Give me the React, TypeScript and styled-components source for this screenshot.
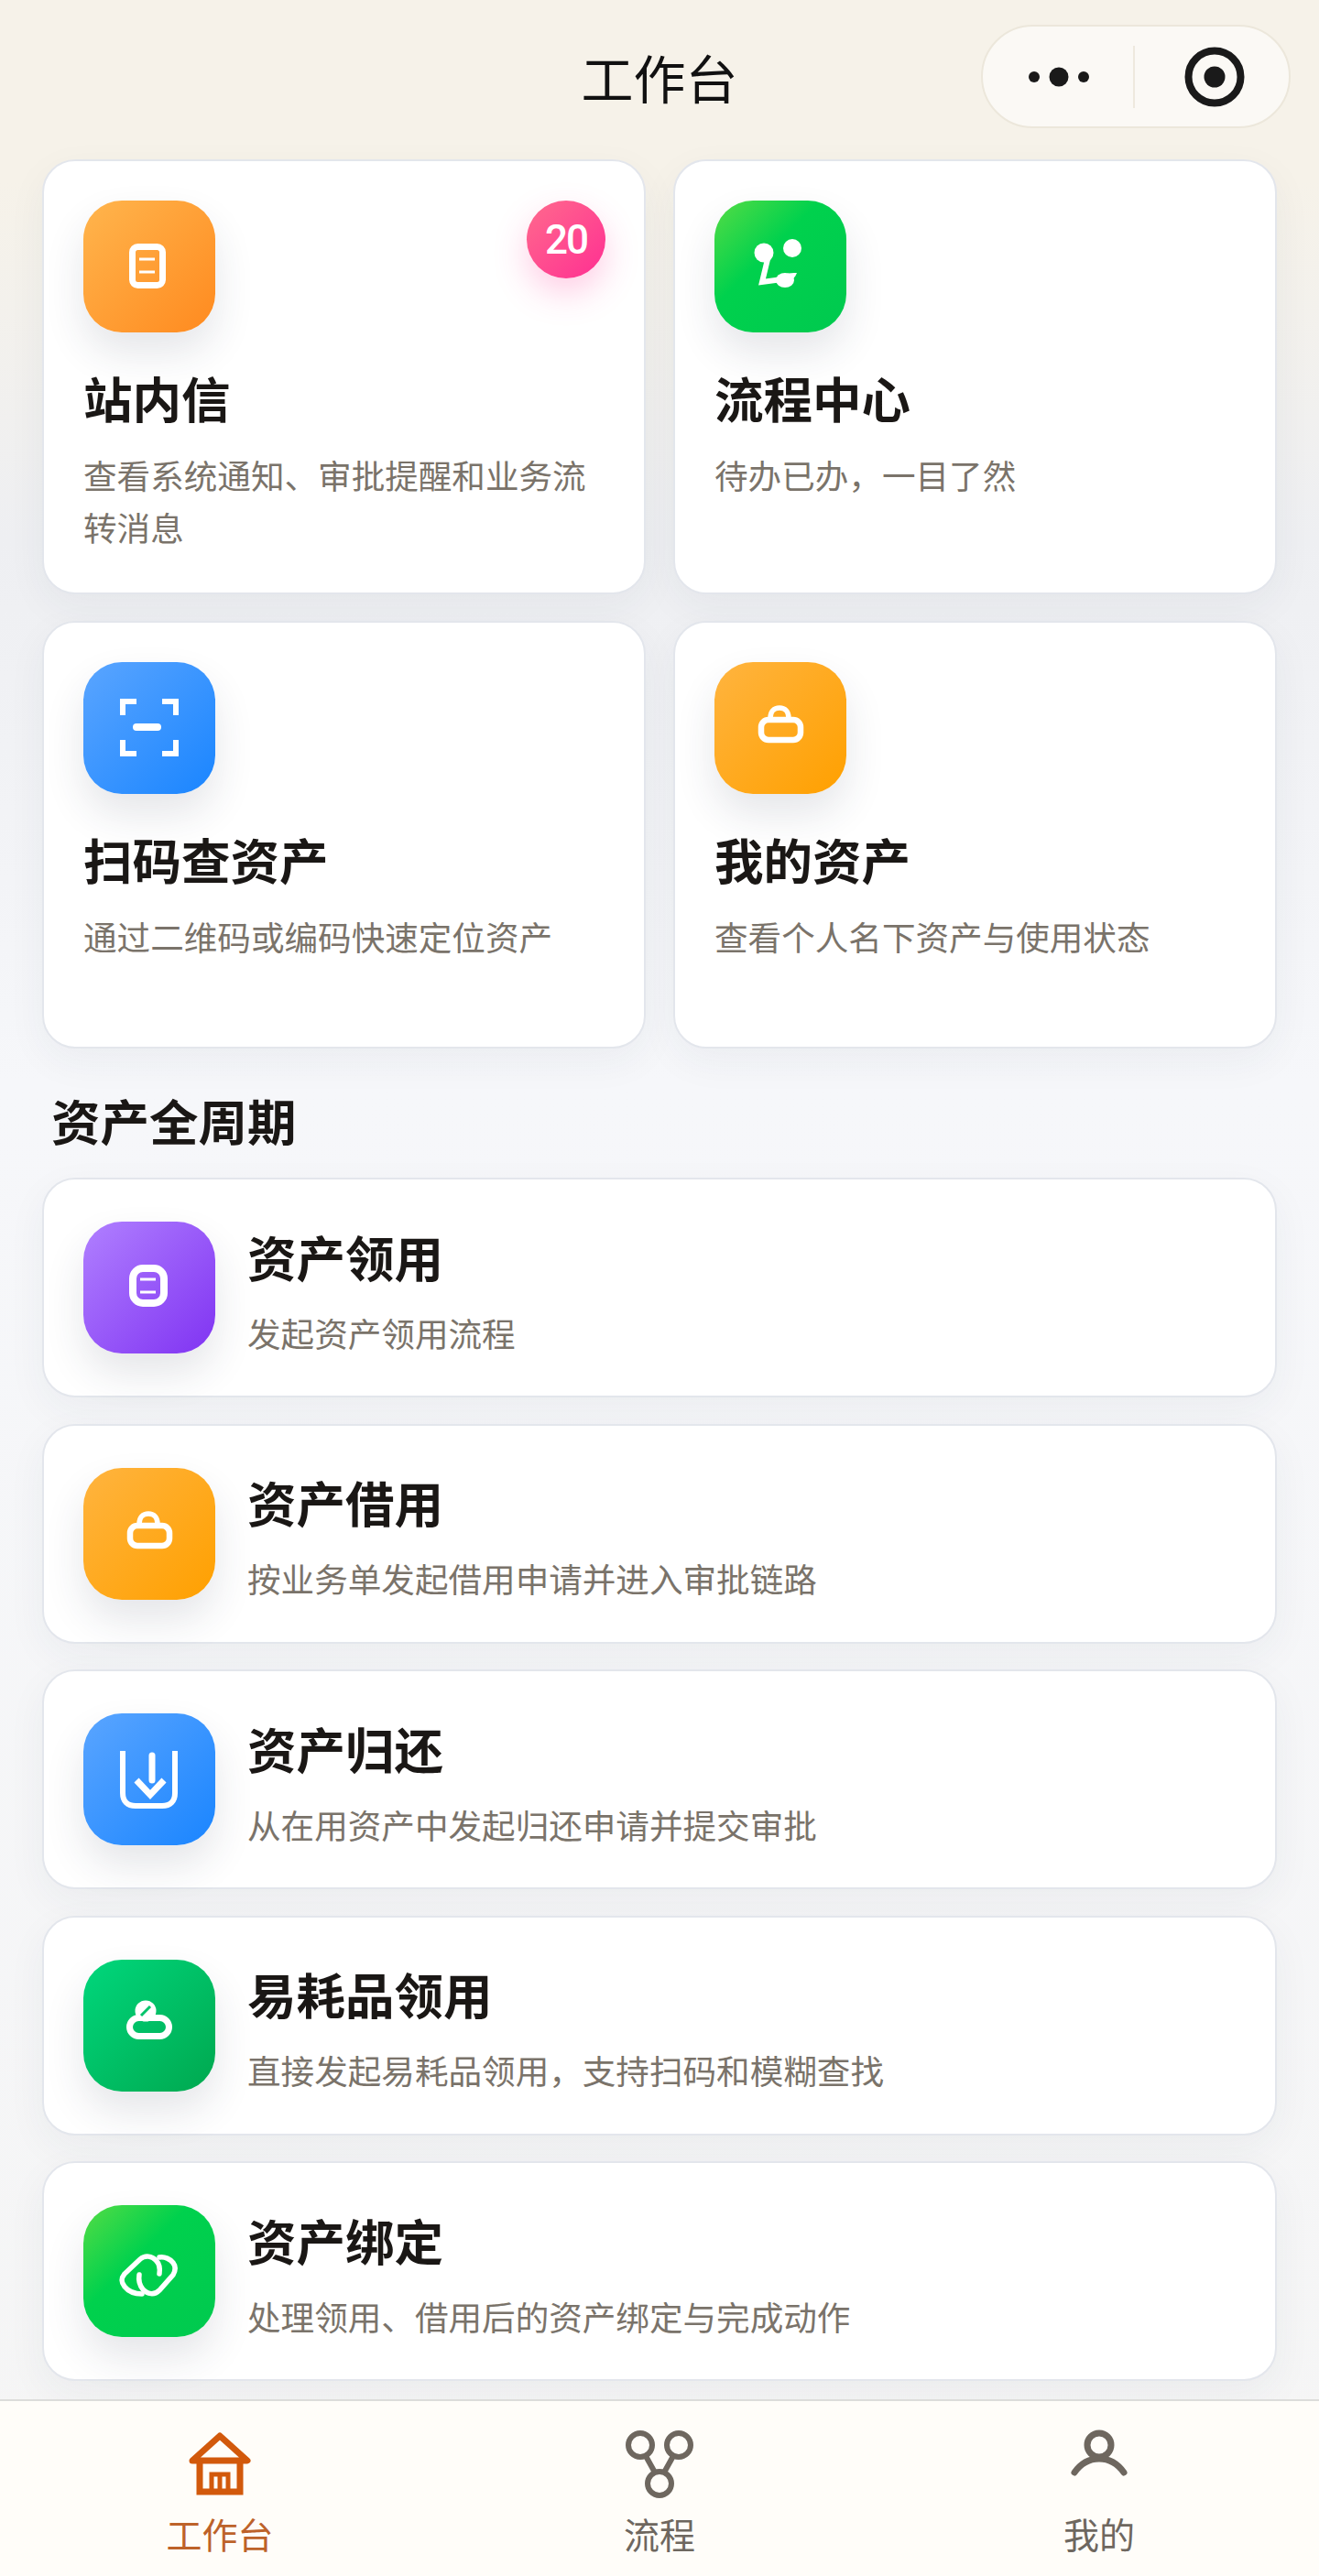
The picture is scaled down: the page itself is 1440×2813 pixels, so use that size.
import styled, { createGlobalStyle } from 'styled-components'

const Global = createGlobalStyle`
  html, body { margin: 0; padding: 0; }
  body { font-family: "Noto Sans CJK SC", "Noto Sans", sans-serif; }
`

const gradients = {
  orange: 'linear-gradient(135deg, #ffb54d 0%, #ff8a1f 100%)',
  amber: 'linear-gradient(135deg, #ffb43f 0%, #ffa000 100%)',
  green: 'linear-gradient(135deg, #55dc45 0%, #00d14d 40%, #00c94f 100%)',
  blue: 'linear-gradient(135deg, #5aa5ff 0%, #1a85ff 100%)',
  purple: 'linear-gradient(135deg, #b080ff 0%, #8033f2 100%)',
  teal: 'linear-gradient(135deg, #00d77c 0%, #00a84f 100%)',
}

type Tone = keyof typeof gradients

const DocGlyph = () => (
  <svg viewBox="0 0 144 144" width="144" height="144" fill="none" stroke="#fff">
    <rect x="53.5" y="50.5" width="33" height="42" rx="6" strokeWidth="7" />
    <path d="M61 64h17M61 78h17" strokeWidth="3" />
  </svg>
)

const RoundDocGlyph = () => (
  <svg viewBox="0 0 144 144" width="144" height="144" fill="none" stroke="#fff">
    <rect x="54" y="51" width="34" height="38" rx="11" strokeWidth="8" />
    <path d="M62 63h17M62 77h17" strokeWidth="3" />
  </svg>
)

const FlowGlyph = () => (
  <svg viewBox="0 0 144 144" width="144" height="144" fill="none">
    <circle cx="54" cy="57" r="10.5" fill="#fff" />
    <circle cx="85" cy="52" r="10" fill="#fff" />
    <path d="M59 60 52 89l22-3" stroke="#fff" strokeWidth="6" />
    <ellipse cx="77" cy="87" rx="10" ry="8" fill="#fff" />
    <path d="M78 80c4-1 8-1 12-1-2 5-5 8-9 9z" fill="#fff" />
  </svg>
)

const ScanGlyph = () => (
  <svg viewBox="0 0 144 144" width="144" height="144" fill="none" stroke="#fff">
    <g strokeWidth="6">
      <path d="M58 43H43v15M86 43h15v15M43 85v15h15M101 85v15H86" />
    </g>
    <path d="M58 71h23" strokeWidth="8" strokeLinecap="round" />
  </svg>
)

const BagGlyph = () => (
  <svg viewBox="0 0 144 144" width="144" height="144" fill="none" stroke="#fff">
    <rect x="51" y="63" width="43" height="22" rx="8" strokeWidth="6.5" />
    <path d="M61 61c0-7 4-11 10-11s10 4 10 11" strokeWidth="5.5" />
  </svg>
)

const ReturnGlyph = () => (
  <svg viewBox="0 0 144 144" width="144" height="144" fill="none" stroke="#fff">
    <path d="M43 41v46c0 9 5 14 14 14h29c9 0 14-5 14-14V41" strokeWidth="6" />
    <path d="M75 46v27" strokeWidth="7" strokeLinecap="round" />
    <path d="M58 73l15 16 15-16" strokeWidth="7" />
  </svg>
)

const CloudGlyph = () => (
  <svg viewBox="0 0 144 144" width="144" height="144" fill="none" stroke="#fff">
    <rect x="50.5" y="63.5" width="43" height="20" rx="10" strokeWidth="7" />
    <circle cx="68" cy="56" r="11.5" fill="#fff" stroke="none" />
    <path d="M63 61l10-10" stroke="#00c46a" strokeWidth="3" />
  </svg>
)

const BindGlyph = () => (
  <svg viewBox="0 0 144 144" width="144" height="144" fill="none" stroke="#fff" strokeWidth="5.5" strokeLinecap="round">
    <path d="M83 75c1-6 0-11-4-15-4-4-11-6-17-1L45 75c-4 5-4 9 0 14 4 5 11 8 19 8" />
    <path d="M61 76c-1 6 0 11 4 16 5 5 12 7 18 1l15-17c3-5 3-9 0-13-3-4-9-7-15-6" />
  </svg>
)

const topCards = [
  { tone: 'orange' as Tone, glyph: <DocGlyph />, title: '站内信', desc: '查看系统通知、审批提醒和业务流转消息', badge: '20' },
  { tone: 'green' as Tone, glyph: <FlowGlyph />, title: '流程中心', desc: '待办已办，一目了然' },
  { tone: 'blue' as Tone, glyph: <ScanGlyph />, title: '扫码查资产', desc: '通过二维码或编码快速定位资产' },
  { tone: 'amber' as Tone, glyph: <BagGlyph />, title: '我的资产', desc: '查看个人名下资产与使用状态' },
]

const lifecycle = [
  { tone: 'purple' as Tone, glyph: <RoundDocGlyph />, title: '资产领用', desc: '发起资产领用流程' },
  { tone: 'amber' as Tone, glyph: <BagGlyph />, title: '资产借用', desc: '按业务单发起借用申请并进入审批链路' },
  { tone: 'blue' as Tone, glyph: <ReturnGlyph />, title: '资产归还', desc: '从在用资产中发起归还申请并提交审批' },
  { tone: 'teal' as Tone, glyph: <CloudGlyph />, title: '易耗品领用', desc: '直接发起易耗品领用，支持扫码和模糊查找' },
  { tone: 'green' as Tone, glyph: <BindGlyph />, title: '资产绑定', desc: '处理领用、借用后的资产绑定与完成动作' },
]

const App = () => (
  <>
    <Global />
    <Page>
      <NavBar>
        <NavTitle>工作台</NavTitle>
        <Capsule>
          <CapsuleSide>
            <MoreDots viewBox="0 0 66 24" width="66" height="24">
              <circle cx="6" cy="12" r="6" />
              <circle cx="33" cy="12" r="10.5" />
              <circle cx="60" cy="12" r="6" />
            </MoreDots>
          </CapsuleSide>
          <CapsuleDivider />
          <RecordSide>
            <svg viewBox="0 0 66 66" width="66" height="66">
              <circle cx="33" cy="33" r="28.5" fill="none" stroke="#1a1a1a" strokeWidth="8" />
              <circle cx="33" cy="33" r="11.5" fill="#1a1a1a" />
            </svg>
          </RecordSide>
        </Capsule>
      </NavBar>

      <Content>
        <TopGrid>
          {topCards.map((card) => (
            <TopCard key={card.title}>
              <Tile $tone={card.tone}>{card.glyph}</Tile>
              {card.badge && <Badge>{card.badge}</Badge>}
              <TopTitle>{card.title}</TopTitle>
              <TopDesc>{card.desc}</TopDesc>
            </TopCard>
          ))}
        </TopGrid>

        <SectionTitle>资产全周期</SectionTitle>

        <List>
          {lifecycle.map((row) => (
            <RowCard key={row.title}>
              <Tile $tone={row.tone}>{row.glyph}</Tile>
              <RowText>
                <RowTitle>{row.title}</RowTitle>
                <RowDesc>{row.desc}</RowDesc>
              </RowText>
            </RowCard>
          ))}
        </List>
      </Content>

      <TabBar>
        <Tab $active>
          <TabIcon>
            <svg viewBox="0 0 80 80" width="80" height="80" fill="none" stroke="#d2590c" strokeWidth="7">
              <path d="M10 35 40 8l30 27H10z" strokeLinejoin="round" />
              <path d="M18 35v34h44V35" />
              <path d="M31 69V50h18v19M40 50v19" strokeWidth="5" />
            </svg>
          </TabIcon>
          <TabLabel>工作台</TabLabel>
        </Tab>
        <Tab>
          <TabIcon>
            <svg viewBox="0 0 80 80" width="80" height="80" fill="none" stroke="#6e675f" strokeWidth="6">
              <circle cx="19" cy="18" r="13" />
              <circle cx="61" cy="18" r="13" />
              <circle cx="40" cy="60" r="13" />
              <path d="M25 30l10 18M55 30 45 48" />
            </svg>
          </TabIcon>
          <TabLabel>流程</TabLabel>
        </Tab>
        <Tab>
          <TabIcon>
            <svg viewBox="0 0 80 80" width="80" height="80" fill="none" stroke="#6e675f" strokeWidth="7" strokeLinecap="round">
              <circle cx="40" cy="18" r="13" />
              <path d="M13 48c7-10 16-15 27-15s20 5 27 15" />
            </svg>
          </TabIcon>
          <TabLabel>我的</TabLabel>
        </Tab>
      </TabBar>
    </Page>
  </>
)

export default App

const Page = styled.div`
  width: 1440px;
  height: 2813px;
  display: flex;
  flex-direction: column;
  overflow: hidden;
  background: linear-gradient(180deg, #f6f2e9 0%, #f6f2e9 7%, #eeeff2 21%, #f6f7fa 42%, #f5f5f5 100%);
`

const NavBar = styled.header`
  height: 174px;
  flex: none;
  display: flex;
  align-items: flex-start;
  justify-content: center;
  padding-top: 24px;
  box-sizing: border-box;
  position: relative;
`

const NavTitle = styled.h1`
  margin: 0;
  font-size: 57px;
  line-height: 118px;
  font-weight: 400;
  color: #111;
`

const Capsule = styled.div`
  position: absolute;
  top: 27px;
  right: 31px;
  width: 338px;
  height: 113px;
  box-sizing: border-box;
  display: flex;
  align-items: center;
  border-radius: 57px;
  border: 2px solid #ece7db;
  background: #fbf9f5;
`

const CapsuleSide = styled.div`
  flex: 1;
  display: flex;
  align-items: center;
  justify-content: center;
  padding-left: 2px;
`

const RecordSide = styled(CapsuleSide)`
  padding-left: 6px;
`

const CapsuleDivider = styled.div`
  width: 2px;
  height: 68px;
  background: #eee9de;
`

const MoreDots = styled.svg`
  fill: #1a1a1a;
`

const Content = styled.main`
  flex: 1;
  padding: 0 46px;
`

const TopGrid = styled.div`
  display: grid;
  grid-template-columns: 1fr 1fr;
  gap: 29px 30px;
`

const TopCard = styled.section`
  position: relative;
  box-sizing: border-box;
  padding: 43px 42px 43px 43px;
  background: #fff;
  border: 2px solid #e3e6ec;
  border-radius: 36px;
  box-shadow: 0 14px 44px rgba(40, 50, 70, 0.05);
`

const Tile = styled.div<{ $tone: Tone }>`
  flex: none;
  width: 144px;
  height: 144px;
  border-radius: 42px;
  background: ${({ $tone }) => gradients[$tone]};
  box-shadow: 0 22px 44px rgba(40, 50, 70, 0.12);

  svg {
    display: block;
  }
`

const Badge = styled.span`
  position: absolute;
  top: 43px;
  right: 42px;
  width: 86px;
  height: 85px;
  display: flex;
  align-items: center;
  justify-content: center;
  border-radius: 50%;
  background: linear-gradient(135deg, #ff6a8d 0%, #ff2f92 100%);
  box-shadow: 0 16px 36px rgba(255, 60, 150, 0.25);
  color: #fff;
  font-family: Roboto, "Noto Sans", sans-serif;
  font-size: 44px;
  font-weight: 500;
  letter-spacing: -2px;
`

const TopTitle = styled.h2`
  margin: 35px 0 0;
  font-size: 53.5px;
  line-height: 72px;
  font-weight: 700;
  color: #1a1715;
`

const TopDesc = styled.p`
  margin: 20px 0 0;
  min-height: 106px;
  font-size: 36.6px;
  line-height: 57px;
  color: #7a736a;
`

const SectionTitle = styled.h2`
  margin: 42px 0 27px 10px;
  font-size: 53.5px;
  line-height: 72px;
  font-weight: 700;
  color: #1a1715;
`

const List = styled.div`
  display: flex;
  flex-direction: column;
  gap: 28.5px;
`

const RowCard = styled.section`
  height: 240px;
  box-sizing: border-box;
  display: flex;
  align-items: center;
  gap: 35px;
  padding: 0 42px 0 43px;
  background: #fff;
  border: 2px solid #e3e6ec;
  border-radius: 36px;
  box-shadow: 0 14px 44px rgba(40, 50, 70, 0.05);
`

const RowText = styled.div`
  display: flex;
  flex-direction: column;
  padding-top: 4px;
`

const RowTitle = styled.h3`
  margin: 0;
  font-size: 53.5px;
  line-height: 72px;
  font-weight: 700;
  color: #1a1715;
`

const RowDesc = styled.p`
  margin: 23px 0 0;
  font-size: 36.6px;
  line-height: 50px;
  color: #7a736a;
`

const TabBar = styled.nav`
  flex: none;
  height: 193px;
  box-sizing: border-box;
  display: grid;
  grid-template-columns: repeat(3, 1fr);
  border-top: 2px solid #dcdcda;
  background: #fffdf9;
`

const Tab = styled.div<{ $active?: boolean }>`
  display: flex;
  flex-direction: column;
  align-items: center;
  padding-top: 30px;
  color: ${({ $active }) => ($active ? '#bd622a' : '#6e675f')};
`

const TabIcon = styled.div`
  height: 80px;

  svg {
    display: block;
  }
`

const TabLabel = styled.span`
  margin-top: 9px;
  font-size: 39px;
  line-height: 50px;
`
